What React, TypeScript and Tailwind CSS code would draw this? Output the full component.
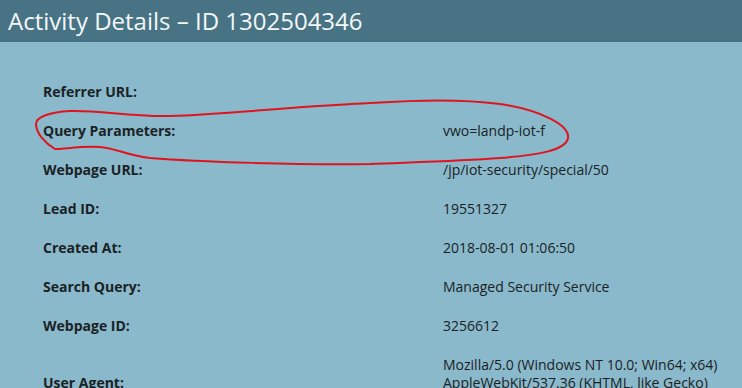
import React from 'react';

const rows = [
  { label: 'Referrer URL:', value: [''] },
  { label: 'Query Parameters:', value: ['vwo=landp-iot-f'] },
  { label: 'Webpage URL:', value: ['/jp/iot-security/special/50'] },
  { label: 'Lead ID:', value: ['19551327'] },
  { label: 'Created At:', value: ['2018-08-01 01:06:50'] },
  { label: 'Search Query:', value: ['Managed Security Service'] },
  { label: 'Webpage ID:', value: ['3256612'] },
  {
    label: 'User Agent:',
    value: [
      'Mozilla/5.0 (Windows NT 10.0; Win64; x64)',
      'AppleWebKit/537.36 (KHTML, like Gecko)',
      'Chrome/67.0.3396.99 Safari/537.36',
    ],
  },
];

const App = () => {
  return (
    <div
      className="relative min-h-screen bg-[#89b9cb] text-[14px] text-[#1b2225]"
      style={{ fontFamily: '"Open Sans", "Noto Sans", sans-serif' }}
    >
      {/* Header */}
      <div className="h-[42px] bg-[#477384] pl-[8px] flex items-center">
        <h1 className="text-[24px] leading-none text-[#f3f7f8] font-normal pb-[1px]">
          Activity Details – ID 1302504346
        </h1>
      </div>

      {/* Details table */}
      <div className="pt-[30px] pl-[43px]">
        {rows.map((row) => (
          <div key={row.label} className="grid grid-cols-[400px_1fr] items-center py-[10.5px]">
            <div className="font-bold leading-[18px]">{row.label}</div>
            <div className="leading-[18px] min-h-[18px]">
              {row.value.map((line, i) => (
                <div key={i} className="whitespace-nowrap">
                  {line}
                </div>
              ))}
            </div>
          </div>
        ))}
      </div>

      {/* Hand-drawn annotation */}
      <svg
        className="absolute left-0 top-0 pointer-events-none"
        width="742"
        height="388"
        viewBox="0 0 742 388"
      >
        <path
          d="M55,149 C45,143 36,133 36,124 C36,117 50,112 70,111 C100,110 130,117 170,116 C230,114 300,106 371,103 C420,100 460,99 500,104 C540,110 570,125 568,138 C566,150 540,155 500,158 C460,161 420,162 370,164 C300,165 200,162 150,158 C125,155 115,148 100,147 C80,146 65,149 55,149"
          fill="none"
          stroke="#e0141e"
          strokeWidth="2"
          strokeLinecap="round"
        />
      </svg>
    </div>
  );
};

export default App;
